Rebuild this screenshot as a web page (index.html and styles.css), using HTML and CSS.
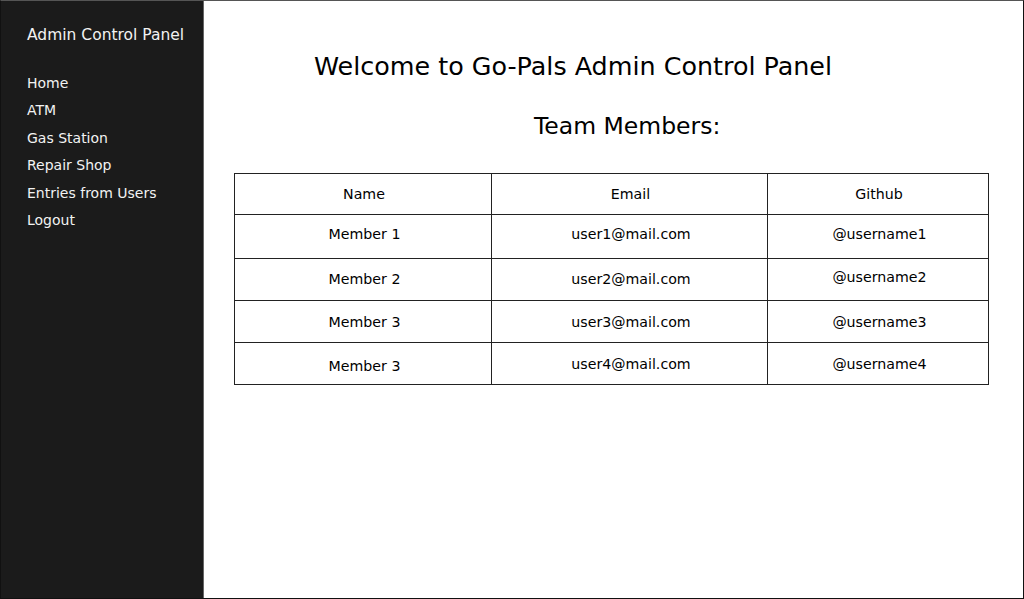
FILE: index.html
```html
<!DOCTYPE html>
<html>
<head>
<meta charset="utf-8">
<link rel="stylesheet" href="styles.css">
</head>
<body>
<div class="page">
  <aside class="sidebar">
    <div class="brand">Admin Control Panel</div>
    <nav class="nav">
      <a class="nav-item">Home</a>
      <a class="nav-item">ATM</a>
      <a class="nav-item">Gas Station</a>
      <a class="nav-item">Repair Shop</a>
      <a class="nav-item">Entries from Users</a>
      <a class="nav-item">Logout</a>
    </nav>
  </aside>
  <main class="main">
    <h1 class="title">Welcome to Go-Pals Admin Control Panel</h1>
    <h2 class="subtitle">Team Members:</h2>
    <table class="team">
      <thead>
        <tr class="r-head"><th class="c-name">Name</th><th class="c-email">Email</th><th class="c-git">Github</th></tr>
      </thead>
      <tbody>
        <tr class="r1"><td>Member 1</td><td>user1@mail.com</td><td>@username1</td></tr>
        <tr class="r2"><td>Member 2</td><td>user2@mail.com</td><td>@username2</td></tr>
        <tr class="r3"><td>Member 3</td><td>user3@mail.com</td><td>@username3</td></tr>
        <tr class="r4"><td>Member 3</td><td>user4@mail.com</td><td>@username4</td></tr>
      </tbody>
    </table>
  </main>
</div>
</body>
</html>
```
FILE: styles.css
```css
html, body {
  margin: 0;
  padding: 0;
  background: #fff;
}
body {
  font-family: "DejaVu Sans", sans-serif;
}
.page {
  box-sizing: border-box;
  width: 1024px;
  height: 599px;
  border: 1px solid #111;
  border-top-color: #555;
  display: flex;
  overflow: hidden;
}
.sidebar {
  width: 203px;
  flex: none;
  background: #1b1b1b;
  border-right: 1px solid #666;
  padding: 24px 0 0 26px;
  box-sizing: border-box;
  color: #f2f2f2;
}
.brand {
  font-size: 15.5px;
  line-height: 20px;
  white-space: nowrap;
}
.nav {
  display: flex;
  flex-direction: column;
  margin-top: 25px;
}
.nav-item {
  font-size: 14px;
  line-height: 27.4px;
  color: #f2f2f2;
  white-space: nowrap;
}
.main {
  flex: 1;
  display: flex;
  flex-direction: column;
  padding-left: 30px;
}
.title {
  margin: 49px 0 0 80px;
  font-size: 25.4px;
  font-weight: normal;
  line-height: 32px;
  color: #000;
  white-space: nowrap;
}
.subtitle {
  margin: 28px 0 0 300px;
  font-size: 23.5px;
  font-weight: normal;
  line-height: 32px;
  color: #000;
  white-space: nowrap;
}
.team {
  margin-top: 31px;
  width: 755px;
  border-collapse: collapse;
  font-size: 14.2px;
  color: #000;
}
.team th, .team td {
  border: 1px solid #222;
  text-align: center;
  font-weight: normal;
  padding: 0;
}
.team th { padding-left: 2px; }
.team td { padding-left: 3px; }
.c-name { width: 254px; }
.c-email { width: 273px; }
.r-head { height: 41px; }
.r-head th { padding-bottom: 1px; }
.r1 { height: 44px; }
.r2, .r3, .r4 { height: 42px; }
.r1 td { vertical-align: top; padding-top: 11px; }
.r2 td:nth-child(3) { vertical-align: top; padding-top: 10px; }
.r2 td:nth-child(1), .r2 td:nth-child(2) { padding-bottom: 2px; }
.r4 td:first-child { padding-top: 4px; }
```
